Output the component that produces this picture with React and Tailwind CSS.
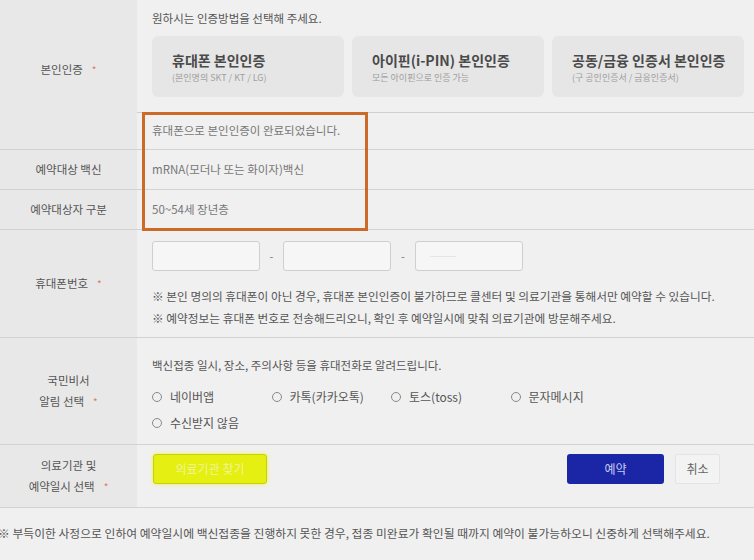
const FONT = { fontFamily: '"Noto Sans CJK KR", "Noto Sans", sans-serif' };

function Star() {
  return <span className="ml-[9px] text-[10px] text-[#e07a6a]">*</span>;
}

function Label({ children }) {
  return (
    <div className="flex w-[137px] shrink-0 items-center justify-center bg-[#e8e8e8] text-center text-[11.5px] leading-[21px] text-[#555]">
      {children}
    </div>
  );
}

function AuthCard({ title, sub }) {
  return (
    <div className="flex h-[61px] w-[192px] flex-col justify-center rounded-[6px] bg-[#e6e6e6] pl-[20px]">
      <div className="text-[14px] font-bold leading-[20px] text-[#4a4a4a]">{title}</div>
      <div className="mt-[2px] text-[9px] leading-[12px] text-[#a0a0a0]">{sub}</div>
    </div>
  );
}

function PhoneInput({ faint }) {
  return (
    <div className="flex h-[30px] w-[108px] items-center rounded-[3px] border border-[#cfcfcf] bg-[#f6f6f6] pl-[14px]">
      {faint ? <div className="h-px w-[26px] bg-[#e4e4e4]" /> : null}
    </div>
  );
}

function Radio({ label }) {
  return (
    <div className="flex items-center text-[12px] text-[#555]">
      <span className="mr-[8px] h-[10px] w-[10px] rounded-full border border-[#888]" />
      {label}
    </div>
  );
}

export default function App() {
  return (
    <div className="relative h-[560px] w-[754px] overflow-hidden bg-[#f0f0f0]" style={FONT}>
      {/* 본인인증 */}
      <div className="flex h-[150px] border-b border-[#d2d2d2]">
        <Label>
          <span className="-mt-[10px]">본인인증<Star /></span>
        </Label>
        <div className="flex flex-1 flex-col">
          <div className="h-[113px] border-b border-[#cfcfcf] pl-[15px] pt-[8px]">
            <div className="text-[11.5px] leading-[20px] text-[#555]">원하시는 인증방법을 선택해 주세요.</div>
            <div className="mt-[8px] flex gap-[8px]">
              <AuthCard title="휴대폰 본인인증" sub="(본인명의 SKT / KT / LG)" />
              <AuthCard title="아이핀(i-PIN) 본인인증" sub="모든 아이핀으로 인증 가능" />
              <AuthCard title="공동/금융 인증서 본인인증" sub="(구 공인인증서 / 금융인증서)" />
            </div>
          </div>
          <div className="flex flex-1 items-center pl-[15px] text-[11.5px] text-[#777]">
            휴대폰으로 본인인증이 완료되었습니다.
          </div>
        </div>
      </div>

      <div className="flex h-[40px] border-b border-[#d2d2d2]">
        <Label>예약대상 백신</Label>
        <div className="flex flex-1 items-center pl-[15px] text-[11.5px] text-[#777]">mRNA(모더나 또는 화이자)백신</div>
      </div>

      <div className="flex h-[40px] border-b border-[#d2d2d2]">
        <Label>예약대상자 구분</Label>
        <div className="flex flex-1 items-center pl-[15px] text-[11.5px] text-[#777]">50~54세 장년층</div>
      </div>

      {/* 휴대폰번호 */}
      <div className="flex h-[108px] border-b border-[#d2d2d2]">
        <Label>
          <span>휴대폰번호<Star /></span>
        </Label>
        <div className="flex-1 pl-[15px] pt-[11px]">
          <div className="flex items-center">
            <PhoneInput />
            <span className="w-[23px] text-center text-[11px] text-[#777]">-</span>
            <PhoneInput />
            <span className="w-[24px] text-center text-[11px] text-[#777]">-</span>
            <PhoneInput faint />
          </div>
          <div className="mt-[14px] text-[11.7px] leading-[22px] text-[#555]">
            <div>※ 본인 명의의 휴대폰이 아닌 경우, 휴대폰 본인인증이 불가하므로 콜센터 및 의료기관을 통해서만 예약할 수 있습니다.</div>
            <div>※ 예약정보는 휴대폰 번호로 전송해드리오니, 확인 후 예약일시에 맞춰 의료기관에 방문해주세요.</div>
          </div>
        </div>
      </div>

      {/* 국민비서 */}
      <div className="flex h-[107px] border-b border-[#d2d2d2]">
        <Label>
          <span>
            국민비서
            <br />
            알림 선택<Star />
          </span>
        </Label>
        <div className="flex-1 pl-[15px] pt-[17px]">
          <div className="text-[11.5px] leading-[20px] text-[#555]">백신접종 일시, 장소, 주의사항 등을 휴대전화로 알려드립니다.</div>
          <div className="mt-[13px] grid w-[478px] grid-cols-4 gap-y-[8px] leading-[18px]">
            <Radio label="네이버앱" />
            <Radio label="카톡(카카오톡)" />
            <Radio label="토스(toss)" />
            <Radio label="문자메시지" />
            <Radio label="수신받지 않음" />
          </div>
        </div>
      </div>

      {/* 의료기관 */}
      <div className="flex h-[63px] border-b border-[#d2d2d2]">
        <Label>
          <span>
            의료기관 및
            <br />
            예약일시 선택<Star />
          </span>
        </Label>
        <div className="flex flex-1 items-start pl-[16px] pr-[34px] pt-[9px]">
          <button className="h-[30px] w-[114px] rounded-[3px] border border-[#c8d000] bg-[#e5ef12] text-[12px] text-[#f2f59a] shadow-[0_0_4px_#eef35a]">
            의료기관 찾기
          </button>
          <div className="flex-1" />
          <button className="h-[30px] w-[97px] rounded-[3px] bg-[#1a26a6] text-[12px] text-[#c9ccf0]">예약</button>
          <button className="ml-[11px] h-[30px] w-[45px] rounded-[2px] border border-[#e4e4e4] bg-[#f3f3f3] text-[12px] text-[#666]">
            취소
          </button>
        </div>
      </div>

      <div className="-ml-[2px] pt-[15px] text-[11.8px] leading-[20px] text-[#555]">
        ※ 부득이한 사정으로 인하여 예약일시에 백신접종을 진행하지 못한 경우, 접종 미완료가 확인될 때까지 예약이 불가능하오니 신중하게 선택해주세요.
      </div>

      {/* highlight annotation */}
      <div className="pointer-events-none absolute left-[142px] top-[112px] h-[119px] w-[226px] border-[3px] border-[#cc6a28]" />
    </div>
  );
}
